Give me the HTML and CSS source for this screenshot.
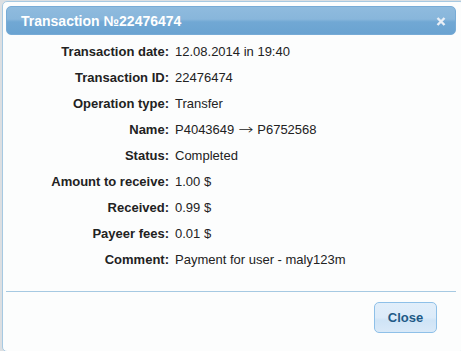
FILE: index.html
```html
<!DOCTYPE html>
<html>
<head>
<meta charset="utf-8">
<link rel="stylesheet" href="styles.css">
</head>
<body>
<div class="dialog">
  <div class="titlebar">
    <span class="title">Transaction №22476474</span>
    <span class="close-x" aria-label="close">
      <svg width="10" height="9" viewBox="0 0 10 9"><path d="M1.5 1 L8.5 8 M8.5 1 L1.5 8" stroke="#e9eff6" stroke-width="2.4" stroke-linecap="butt"/></svg>
    </span>
  </div>
  <div class="content">
    <div class="label">Transaction date:</div><div class="value">12.08.2014 in 19:40</div>
    <div class="label">Transaction ID:</div><div class="value">22476474</div>
    <div class="label">Operation type:</div><div class="value">Transfer</div>
    <div class="label">Name:</div><div class="value">P4043649 <span class="arrow">→</span> P6752568</div>
    <div class="label">Status:</div><div class="value">Completed</div>
    <div class="label">Amount to receive:</div><div class="value">1.00 $</div>
    <div class="label">Received:</div><div class="value">0.99 $</div>
    <div class="label">Payeer fees:</div><div class="value">0.01 $</div>
    <div class="label">Comment:</div><div class="value">Payment for user - maly123m</div>
  </div>
  <div class="buttonpane">
    <button class="btn">Close</button>
  </div>
</div>
</body>
</html>
```
FILE: styles.css
```css
html, body {
  margin: 0;
  padding: 0;
}
body {
  background: #dcdfe2;
  width: 461px;
  height: 351px;
  overflow: hidden;
  font-family: "Liberation Sans", Arial, sans-serif;
}
.dialog {
  margin: 1px 0 0 2px;
  width: 455px;
  height: 345px;
  border: 1px solid #a6c9e2;
  border-radius: 5px;
  background: #fcfdfd;
  padding: 4px 3px 0 3px;
  box-sizing: content-box;
  display: flex;
  flex-direction: column;
  position: relative;
}
.titlebar {
  height: 29px;
  border: 1px solid #77abd6;
  border-radius: 5px;
  background: linear-gradient(to bottom, #8fbbde 0%, #88b6db 45%, #71a8d4 55%, #6aa3d1 100%);
  display: flex;
  align-items: center;
  justify-content: space-between;
  padding: 0 9px 0 14px;
  box-sizing: border-box;
  width: 450px;
}
.title {
  color: #ffffff;
  font-weight: bold;
  font-size: 14px;
}
.close-x {
  display: flex;
  width: 10px;
  height: 9px;
  margin-top: 1px;
}
.content {
  display: grid;
  grid-template-columns: 163px auto;
  grid-auto-rows: 26px;
  align-content: start;
  column-gap: 6px;
  padding-top: 4px;
  font-size: 13px;
  line-height: 26px;
  color: #222222;
  height: 252px;
  box-sizing: border-box;
}
.label {
  text-align: right;
  font-weight: bold;
}
.arrow {
  font-family: "DejaVu Sans", sans-serif;
  font-weight: 200;
  font-size: 14px;
  line-height: 20px;
  display: inline-block;
  transform: scaleX(1.3);
  margin: 0 2px;
}
.buttonpane {
  border-top: 1px solid #a6c9e2;
  width: 450px;
  display: flex;
  justify-content: flex-end;
  padding: 10px 19px 0 0;
  box-sizing: border-box;
  margin-top: 4px;
}
.btn {
  width: 63px;
  height: 31px;
  border: 1px solid #8ec0e8;
  border-radius: 5px;
  background: linear-gradient(to bottom, #e1eefa 0%, #dcebf9 50%, #cfe4f6 60%, #d9e9f8 100%);
  color: #1f5a86;
  font-family: "Liberation Sans", Arial, sans-serif;
  font-weight: bold;
  font-size: 13px;
  padding: 0;
  margin: 0;
}
```
